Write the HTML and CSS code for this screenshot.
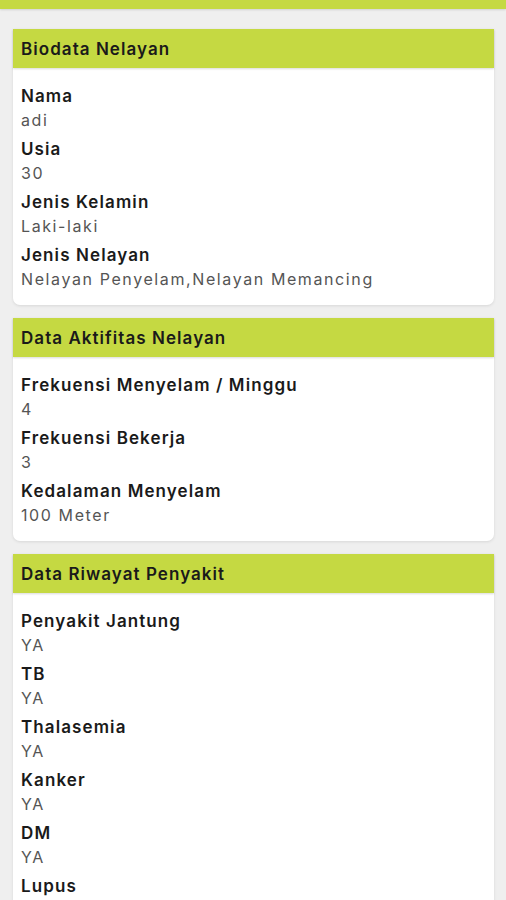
FILE: index.html
```html
<!DOCTYPE html>
<html lang="id">
<head>
<meta charset="utf-8">
<meta name="viewport" content="width=device-width, initial-scale=1">
<title>Detail Nelayan</title>
<link rel="stylesheet" href="styles.css">
</head>
<body>
<div class="topbar"></div>
<main class="content">
  <section class="card">
    <h2 class="card-title">Biodata Nelayan</h2>
    <div class="card-body">
      <div class="item"><div class="label">Nama</div><div class="value">adi</div></div>
      <div class="item"><div class="label">Usia</div><div class="value">30</div></div>
      <div class="item"><div class="label">Jenis Kelamin</div><div class="value">Laki-laki</div></div>
      <div class="item"><div class="label">Jenis Nelayan</div><div class="value">Nelayan Penyelam,Nelayan Memancing</div></div>
    </div>
  </section>
  <section class="card">
    <h2 class="card-title">Data Aktifitas Nelayan</h2>
    <div class="card-body">
      <div class="item"><div class="label">Frekuensi Menyelam / Minggu</div><div class="value">4</div></div>
      <div class="item"><div class="label">Frekuensi Bekerja</div><div class="value">3</div></div>
      <div class="item"><div class="label">Kedalaman Menyelam</div><div class="value">100 Meter</div></div>
    </div>
  </section>
  <section class="card">
    <h2 class="card-title">Data Riwayat Penyakit</h2>
    <div class="card-body">
      <div class="item"><div class="label">Penyakit Jantung</div><div class="value">YA</div></div>
      <div class="item"><div class="label">TB</div><div class="value">YA</div></div>
      <div class="item"><div class="label">Thalasemia</div><div class="value">YA</div></div>
      <div class="item"><div class="label">Kanker</div><div class="value">YA</div></div>
      <div class="item"><div class="label">DM</div><div class="value">YA</div></div>
      <div class="item"><div class="label">Lupus</div><div class="value">YA</div></div>
    </div>
  </section>
</main>
</body>
</html>
```
FILE: styles.css
```css
* { box-sizing: border-box; }
html, body { margin: 0; padding: 0; }
body {
  background: #efefef;
  font-family: Inter, "Open Sans", sans-serif;
  color: #1a1a1a;
}
.topbar {
  height: 9px;
  background: #c5d942;
  box-shadow: 0 1px 2px rgba(0,0,0,0.12);
}
.content {
  display: flex;
  flex-direction: column;
  gap: 13px;
  padding: 20px 12px 20px 13px;
}
.card {
  background: #fff;
  border-radius: 0 0 7px 7px;
  box-shadow: 0 1px 3px rgba(0,0,0,0.10);
}
.card-title {
  margin: 0;
  height: 39px;
  display: flex;
  align-items: center;
  padding: 0 8px;
  background: #c5d942;
  font-size: 17px;
  font-weight: 600;
  letter-spacing: 1.05px;
  color: #1a1a1a;
  box-shadow: 0 1px 2px rgba(0,0,0,0.15);
}
.card-body {
  display: flex;
  flex-direction: column;
  gap: 5px;
  padding: 16px 8px 14px;
}
.label {
  font-size: 17px;
  font-weight: 600;
  letter-spacing: 1.1px;
  line-height: 24px;
  color: #1a1a1a;
}
.value {
  font-size: 16px;
  font-weight: 400;
  letter-spacing: 1.6px;
  line-height: 24px;
  color: #555;
}
```
